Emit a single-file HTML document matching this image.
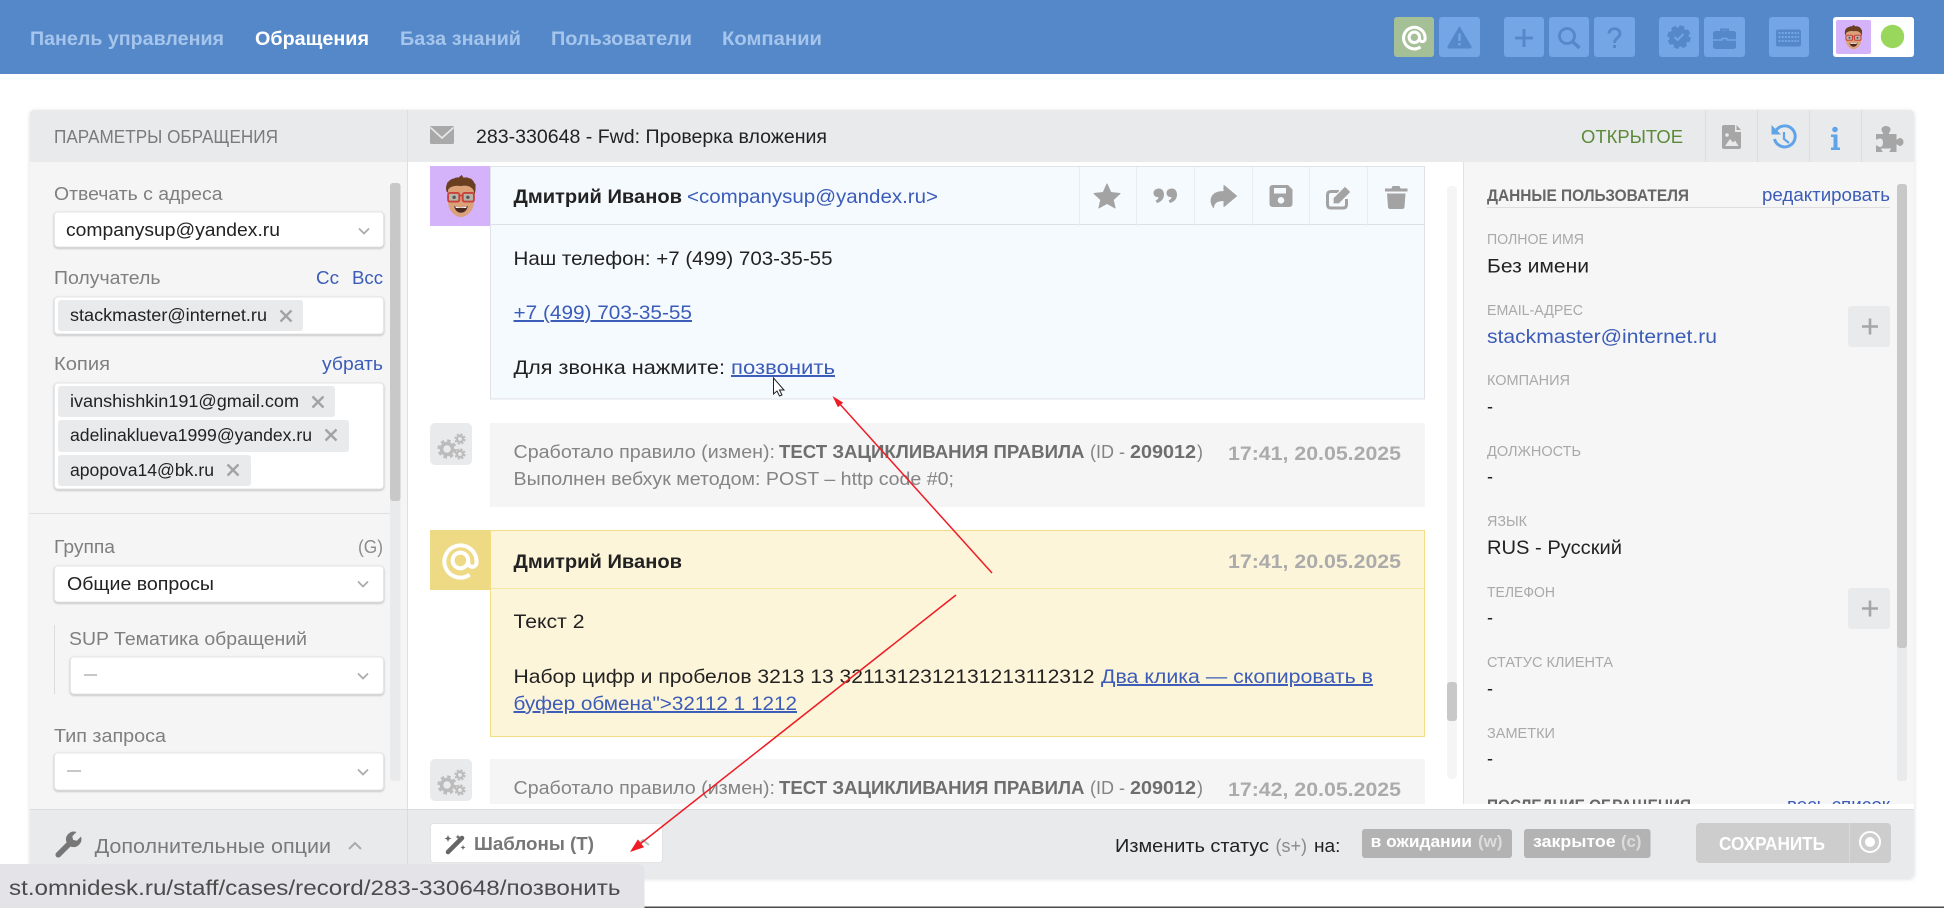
<!DOCTYPE html>
<html lang="ru"><head><meta charset="utf-8"><title>283-330648 - Fwd: Проверка вложения</title>
<style>
html,body{margin:0;padding:0;width:1944px;height:908px;overflow:hidden;background:#fff}
svg{display:block}
text{font-family:"Liberation Sans","Noto Sans CJK SC",sans-serif;font-size:19.8px;fill:#222}
.b{font-weight:700;font-size:19.2px}
.nav{font-weight:700;fill:#a6c5ec;font-size:19px}
.lab{fill:#7f7f7f;font-size:18.6px}
.lnk{fill:#3b5cb8}
.u{fill:#3b5cb8;text-decoration:underline}
.sm{fill:#a9a9a9;font-size:15px}
.tag{font-size:17.4px;fill:#222}
.sys{fill:#848484;font-size:18.6px}
.sysb{fill:#6e6e6e;font-size:18.6px;font-weight:700}
.tm{fill:#ababab;font-weight:700;font-size:19.5px}
.inp{filter:drop-shadow(0 1px 1px rgba(0,0,0,.25))}
</style></head><body>
<svg xmlns="http://www.w3.org/2000/svg" width="1944" height="908" viewBox="0 0 1944 908">
<defs>
<clipPath id="clipc"><rect x="408" y="162" width="1505" height="642"/></clipPath>
<g id="memoji">
  <path d="M13 24C11 14 18 8 26 9L31 5 33 9 41 9C47 13 48 20 46 27L44 26H15Z" fill="#6a3e20"/>
  <path d="M15 22C15 21 20 16 30 18 38 16 44 20 45 24V37C45 46 37 54 30 54 23 54 15 46 15 37Z" fill="#dba179"/>
  <path d="M14 24C16 18 22 18 30 16 38 14 44 18 46 24L47 16 38 8H24L14 14Z" fill="#6a3e20"/>
  <rect x="15" y="26" width="13" height="10" rx="2" fill="#b9b4a8" stroke="#c8413a" stroke-width="2.2"/>
  <rect x="32" y="26" width="13" height="10" rx="2" fill="#b9b4a8" stroke="#c8413a" stroke-width="2.2"/>
  <path d="M28 29h4" stroke="#c8413a" stroke-width="2"/>
  <circle cx="22" cy="31" r="2" fill="#555"/><circle cx="38" cy="31" r="2" fill="#555"/>
  <path d="M22 41C26 43 34 43 38 41 37 47 33 49 30 49 27 49 23 47 22 41Z" fill="#4a2a20"/>
  <path d="M23.500 41.500C27 43 33 43 36.500 41.500L36 43.500H24Z" fill="#fff"/>
</g>
<g id="gear" fill="none" stroke="#bcbcbc">
  <circle cx="10" cy="16" r="5.500" stroke-width="3.500"/>
  <circle cx="10" cy="16" r="8.300" stroke-width="2.600" stroke-dasharray="3.500 3"/>
  <circle cx="23" cy="6" r="3" stroke-width="2.200"/>
  <circle cx="23" cy="6" r="4.800" stroke-width="1.600" stroke-dasharray="2.300 1.500"/>
  <circle cx="23" cy="21" r="3" stroke-width="2.200"/>
  <circle cx="23" cy="21" r="4.800" stroke-width="1.600" stroke-dasharray="2.300 1.500"/>
</g>
<path id="chev" d="M-5-2.500 0 2.500 5-2.500" fill="none" stroke="#aaa" stroke-width="1.700"/>
<path id="xx" d="M-5.500-5.500 5.500 5.500M5.500-5.500-5.500 5.500" fill="none" stroke="#a3a3a3" stroke-width="2.400"/>
<g id="plus"><path d="M0-8V8M-8 0H8" stroke="#a6a6a6" stroke-width="2.600"/></g>
</defs>

<!-- NAVBAR -->
<rect width="1944" height="74" fill="#5488c8"/>
<text class="nav" x="30" y="45" textLength="194" lengthAdjust="spacingAndGlyphs">Панель управления</text>
<text class="nav" style="fill:#fff" x="255" y="45" textLength="114" lengthAdjust="spacingAndGlyphs">Обращения</text>
<text class="nav" x="400" y="45" textLength="121" lengthAdjust="spacingAndGlyphs">База знаний</text>
<text class="nav" x="551" y="45" textLength="141" lengthAdjust="spacingAndGlyphs">Пользователи</text>
<text class="nav" x="722" y="45" textLength="100" lengthAdjust="spacingAndGlyphs">Компании</text>

<rect x="1394" y="17" width="40" height="40" rx="3" fill="#a5c097"/>
<g fill="#74a5e5">
<rect x="1439" y="17" width="41" height="40" rx="3"/>
<rect x="1504" y="17" width="40" height="40" rx="3"/>
<rect x="1549" y="17" width="40" height="40" rx="3"/>
<rect x="1594" y="17" width="41" height="40" rx="3"/>
<rect x="1659" y="17" width="40" height="40" rx="3"/>
<rect x="1704" y="17" width="41" height="40" rx="3"/>
<rect x="1769" y="17" width="40" height="40" rx="3"/>
</g>
<g transform="translate(1402,25) scale(.77)" fill="none" stroke="#fff" stroke-width="4">
  <path d="M24 28.500A14 14 0 1 1 30 16V18A3.600 3.600 0 0 1 22.800 18V16"/><circle cx="16" cy="16" r="6.800"/>
</g>
<path d="M1459.500 27 1471 46.500Q1471.500 48 1470 48H1449Q1447.500 48 1448 46.500Z" fill="#5488c8" stroke="#5488c8" stroke-linejoin="round"/>
<path d="M1459.500 33.500V41M1459.500 43V45.500" stroke="#74a5e5" stroke-width="2.400"/>
<path d="M1524 29V47M1515 38H1533" stroke="#5488c8" stroke-width="2.800"/>
<circle cx="1567" cy="36" r="7.500" fill="none" stroke="#5488c8" stroke-width="2.800"/>
<path d="M1572.500 41.500 1579.500 48" stroke="#5488c8" stroke-width="3.400"/>
<path d="M1609 33.500C1609 27 1620 27 1620 33.500 1620 38 1614.500 38 1614.500 43" fill="none" stroke="#5488c8" stroke-width="2.800"/>
<rect x="1613" y="45" width="3" height="3" fill="#5488c8"/>
<g transform="translate(1679,37)">
  <circle r="9.800" fill="#5488c8"/><circle r="10.300" fill="none" stroke="#5488c8" stroke-width="2.800" stroke-dasharray="5 3.090"/>
  <path d="M-4.500 0-1.500 3 4.500-3" fill="none" stroke="#74a5e5" stroke-width="2"/>
</g>
<path d="M1721 31V29.500H1728V31" fill="none" stroke="#5488c8" stroke-width="2"/>
<rect x="1713" y="31" width="23" height="18" rx="2.500" fill="#5488c8"/>
<path d="M1713 40H1722V38.500H1727V40H1736" stroke="#74a5e5" stroke-width="1.400" fill="none"/>
<rect x="1776" y="29.500" width="25" height="17" rx="2" fill="#5488c8"/>
<path d="M1778.500 33H1799M1778.500 37H1799M1778.500 41H1799" stroke="#74a5e5" stroke-width="2" stroke-dasharray="2 1.200"/>
<rect x="1833" y="17" width="81" height="40" rx="3" fill="#fff"/>
<rect x="1836" y="20" width="35" height="34" rx="2" fill="#d5b3fb"/>
<g transform="translate(1853.500,37) scale(.5) translate(-30,-29.500)"><use href="#memoji"/></g>
<circle cx="1892.500" cy="36.500" r="11.700" fill="#98d65c"/>

<!-- PANEL -->
<rect x="30" y="110" width="1884" height="768" rx="4" fill="#fff" style="filter:drop-shadow(0 1px 2px rgba(0,0,0,.14))"/>
<path d="M30 162V114a4 4 0 0 1 4-4H1910a4 4 0 0 1 4 4V162Z" fill="#e9eaec"/>
<rect x="30" y="162" width="377" height="647" fill="#f5f5f5"/>
<rect x="1463" y="162" width="451" height="642" fill="#f6f6f6"/>
<path d="M407.500 110V809" stroke="#dfdfe1"/>
<path d="M1463.500 162V804" stroke="#e2e2e2"/>
<path d="M1705.500 110V162M1757.500 110V162M1809.500 110V162M1861.500 110V162" stroke="#dcdde0"/>

<text class="lab" x="54" y="143" textLength="224" lengthAdjust="spacingAndGlyphs" style="fill:#7b7b7b;font-size:18px">ПАРАМЕТРЫ ОБРАЩЕНИЯ</text>
<rect x="430" y="126" width="24" height="18" rx="1.500" fill="#a9a9a9"/>
<path d="M430.500 127.500 442 138 453.500 127.500" fill="none" stroke="#e9eaec" stroke-width="1.600"/>
<text x="476" y="143" textLength="351" lengthAdjust="spacingAndGlyphs" style="font-size:19.5px">283-330648 - Fwd: Проверка вложения</text>
<text x="1581" y="143" textLength="102" lengthAdjust="spacingAndGlyphs" style="fill:#5b8a38;font-size:18.6px">ОТКРЫТОЕ</text>

<!-- header right icons -->
<path d="M1724 125H1735V132H1741V147Q1741 149 1739 149H1724Q1722 149 1722 147V127Q1722 125 1724 125ZM1736.500 125 1741 130H1736.500Z" fill="#a6a6a6"/>
<path d="M1725 146 1730 139 1733 142.500 1735 140.500 1738.500 146Z" fill="#e9eaec"/><circle cx="1727" cy="135" r="1.800" fill="#e9eaec"/>
<path d="M1776 130.500A10.500 10.500 0 1 1 1774.500 139" fill="none" stroke="#5fa4e8" stroke-width="3"/>
<path d="M1771.500 125V134.500H1781Z" fill="#5fa4e8"/>
<path d="M1784 132V139L1789 143" fill="none" stroke="#5fa4e8" stroke-width="2.200"/>
<circle cx="1835" cy="129.500" r="2.800" fill="#5fa4e8"/>
<path d="M1831 134.500H1837.500V147.500H1840V150H1831V147.500H1833.500V137H1831Z" fill="#5fa4e8"/>
<path d="M1876 134H1883C1883.500 133 1881.500 131.500 1881.500 129.500 1881.500 127 1884 126 1886 126 1888 126 1890.500 127 1890.500 129.500 1890.500 131.500 1888.500 133 1889 134H1896.500V139.500C1897.500 140 1898.500 138 1900 138 1902 138 1903.500 140 1903.500 142 1903.500 144 1902 146 1900 146 1898.500 146 1897.500 144 1896.500 144.500V152H1889.500C1889 151 1891 150 1891 148.500H1881C1881 150 1883 151 1882.500 152H1876V145.500C1877 145 1878.500 147 1880 147 1882 147 1883 145 1883 142.500 1883 140 1882 138.500 1880 138.500 1878.500 138.500 1877 140 1876 139.500Z" fill="#a6a6a6"/>

<!-- LEFT COLUMN -->
<rect x="390" y="183" width="10.500" height="598" rx="3" fill="#e9eaec"/>
<rect x="390" y="183" width="10.500" height="318" rx="3" fill="#c8c8c8"/>
<path d="M30 513.500H390" stroke="#e0e0e0"/>

<text class="lab" x="54" y="200" textLength="168.500" lengthAdjust="spacingAndGlyphs">Отвечать с адреса</text>
<rect class="inp" x="54.500" y="212" width="329" height="35" rx="3.500" fill="#fff" stroke="#e6e6e6"/>
<text x="66" y="236" textLength="214" lengthAdjust="spacingAndGlyphs" style="font-size:18.6px">companysup@yandex.ru</text>
<use href="#chev" x="364" y="231"/>

<text class="lab" x="54" y="284" textLength="106.500" lengthAdjust="spacingAndGlyphs">Получатель</text>
<text class="lnk" x="316" y="284" textLength="23" lengthAdjust="spacingAndGlyphs" style="font-size:18.6px">Cc</text>
<text class="lnk" x="352" y="284" textLength="31" lengthAdjust="spacingAndGlyphs" style="font-size:18.6px">Bcc</text>
<rect class="inp" x="54.500" y="297" width="329" height="37" rx="3.500" fill="#fff" stroke="#e6e6e6"/>
<rect x="58" y="300" width="245" height="31" rx="3" fill="#e9eaec"/>
<text class="tag" x="70" y="321" textLength="197" lengthAdjust="spacingAndGlyphs">stackmaster@internet.ru</text>
<use href="#xx" x="286" y="316"/>

<text class="lab" x="54" y="370" textLength="56" lengthAdjust="spacingAndGlyphs">Копия</text>
<text class="lnk" x="322" y="370" textLength="61" lengthAdjust="spacingAndGlyphs" style="font-size:18.6px">убрать</text>
<rect class="inp" x="54.500" y="383" width="329" height="106" rx="3.500" fill="#fff" stroke="#e6e6e6"/>
<rect x="58" y="386" width="277" height="31" rx="3" fill="#e9eaec"/>
<text class="tag" x="70" y="407" textLength="229" lengthAdjust="spacingAndGlyphs">ivanshishkin191@gmail.com</text>
<use href="#xx" x="318" y="402"/>
<rect x="58" y="420" width="291" height="32" rx="3" fill="#e9eaec"/>
<text class="tag" x="70" y="441" textLength="242" lengthAdjust="spacingAndGlyphs">adelinaklueva1999@yandex.ru</text>
<use href="#xx" x="331" y="435"/>
<rect x="58" y="455" width="193" height="31" rx="3" fill="#e9eaec"/>
<text class="tag" x="70" y="476" textLength="144" lengthAdjust="spacingAndGlyphs">apopova14@bk.ru</text>
<use href="#xx" x="233" y="470"/>

<text class="lab" x="54" y="553" textLength="61" lengthAdjust="spacingAndGlyphs">Группа</text>
<text class="lab" x="358" y="553" textLength="25" lengthAdjust="spacingAndGlyphs" style="fill:#8c8c8c">(G)</text>
<rect class="inp" x="54.500" y="566" width="329" height="36" rx="3.500" fill="#fff" stroke="#e6e6e6"/>
<text x="67" y="590" textLength="147" lengthAdjust="spacingAndGlyphs" style="font-size:18.6px">Общие вопросы</text>
<use href="#chev" x="363" y="584"/>

<path d="M54.500 625V694" stroke="#dcdcdc"/>
<text class="lab" x="69" y="645" textLength="238" lengthAdjust="spacingAndGlyphs">SUP Тематика обращений</text>
<rect class="inp" x="70.500" y="657" width="313" height="37" rx="3.500" fill="#fff" stroke="#e6e6e6"/>
<path d="M84 675H97" stroke="#a9a9a9" stroke-width="1.300"/>
<use href="#chev" x="363" y="676"/>
<text class="lab" x="54" y="742" textLength="112" lengthAdjust="spacingAndGlyphs">Тип запроса</text>
<rect class="inp" x="54.500" y="753" width="329" height="37" rx="3.500" fill="#fff" stroke="#e6e6e6"/>
<path d="M67 771H81" stroke="#a9a9a9" stroke-width="1.300"/>
<use href="#chev" x="363" y="772"/>

<!-- MESSAGES -->
<g clip-path="url(#clipc)">
<rect x="1447" y="186" width="10" height="593" rx="4" fill="#f5f5f5"/>
<rect x="1447" y="682" width="10" height="39" rx="3" fill="#c8c8c8"/>

<rect x="430" y="166" width="60" height="60" fill="#d5b3fb"/>
<g transform="translate(461,196) scale(.86) translate(-30,-29.500)"><use href="#memoji"/></g>
<rect x="490.500" y="166.500" width="934" height="232.500" fill="#f5faff" stroke="#dfe3e8"/>
<path d="M491 224.500H1424" stroke="#dde1e6"/>
<path d="M1079.500 167V226M1136.500 167V226M1194.500 167V226M1252.500 167V226M1309.500 167V226M1367.500 167V226" stroke="#e9edf1"/>
<text class="b" x="513.500" y="203" textLength="168.500" lengthAdjust="spacingAndGlyphs">Дмитрий Иванов</text>
<text class="lnk" x="687" y="203" textLength="251" lengthAdjust="spacingAndGlyphs">&lt;companysup@yandex.ru&gt;</text>
<polygon points="1107,184 1110.800,192.500 1120,193.500 1113.200,199.800 1115.100,208 1107,203.500 1098.900,208 1100.800,199.800 1094,193.500 1103.200,192.500" fill="#a3a3a3" stroke="#a3a3a3" stroke-linejoin="round"/>
<path d="M1159 188.500c3 0 5 2.500 5 6 0 4.500-3 7.500-7 8.500l-1.500-2.500c2-.7 3-2 3-3.500-3 .5-5-1.500-5-4 0-2.700 2.300-4.500 5.500-4.500zM1172 188.500c3 0 5 2.500 5 6 0 4.500-3 7.500-7 8.500l-1.500-2.500c2-.7 3-2 3-3.500-3 .5-5-1.500-5-4 0-2.700 2.300-4.500 5.500-4.500z" fill="#a3a3a3"/>
<path d="M1224 185.500 1236.500 196 1224 206.500V200.500C1218 200.500 1214 202 1213.500 207.500 1208.500 200 1211 191.500 1224 191.500Z" fill="#a3a3a3" stroke="#a3a3a3" stroke-linejoin="round"/>
<path fill-rule="evenodd" d="M1273 185H1288L1292.500 189.500V203.500Q1292.500 207 1289 207H1273Q1269.500 207 1269.500 203.500V188.500Q1269.500 185 1273 185ZM1274 188V193.500H1286V188ZM1281 197A3.300 3.300 0 1 0 1281 203.600 3.300 3.300 0 0 0 1281 197Z" fill="#a3a3a3"/>
<path d="M1339 191.500H1331Q1327.500 191.500 1327.500 195V204.500Q1327.500 208 1331 208H1343Q1346.500 208 1346.500 204.500V199" fill="none" stroke="#a3a3a3" stroke-width="3"/>
<path d="M1333 204V198L1345 186 1351 192 1339 204Z" fill="#a3a3a3" stroke="#f5faff" stroke-width="1.200"/>
<path d="M1385 188.500H1391.500L1392.500 186H1399.500L1400.500 188.500H1407.500V191.500H1385ZM1387 193.500H1405.500L1404.500 207Q1404.300 209 1402 209H1390.500Q1388.200 209 1388 207Z" fill="#a3a3a3"/>

<text x="513.500" y="265" textLength="319" lengthAdjust="spacingAndGlyphs">Наш телефон: +7 (499) 703-35-55</text>
<text class="u" x="513.500" y="319" textLength="178.500" lengthAdjust="spacingAndGlyphs">+7 (499) 703-35-55</text>
<text x="513.500" y="374" textLength="211.500" lengthAdjust="spacingAndGlyphs">Для звонка нажмите:</text>
<text class="u" x="731" y="374" textLength="104" lengthAdjust="spacingAndGlyphs">позвонить</text>
<path d="M773.500 378V394L777 391 779.500 396 782 395 779.500 390H784Z" fill="#fff" stroke="#222" stroke-width="1"/>

<rect x="430" y="423" width="42" height="42" rx="5" fill="#e9eaec"/>
<g transform="translate(437,433)"><use href="#gear"/></g>
<rect x="490" y="423" width="935" height="84" fill="#f5f5f5"/>
<text class="sys" x="513.500" y="458" textLength="261.500" lengthAdjust="spacingAndGlyphs">Сработало правило (измен):</text>
<text class="sysb" x="779" y="458" textLength="305.500" lengthAdjust="spacingAndGlyphs">ТЕСТ ЗАЦИКЛИВАНИЯ ПРАВИЛА</text>
<text class="sys" x="1090" y="458" textLength="35" lengthAdjust="spacingAndGlyphs">(ID -</text>
<text class="sysb" x="1130" y="458" textLength="66" lengthAdjust="spacingAndGlyphs">209012</text>
<text class="sys" x="1197" y="458" textLength="6" lengthAdjust="spacingAndGlyphs">)</text>
<text class="tm" x="1228" y="460" textLength="173" lengthAdjust="spacingAndGlyphs">17:41, 20.05.2025</text>
<text class="sys" x="513.500" y="485" textLength="440.500" lengthAdjust="spacingAndGlyphs">Выполнен вебхук методом: POST – http code #0;</text>

<rect x="430" y="530" width="60" height="60" fill="#eed985"/>
<g transform="translate(442,542) scale(1.15)" fill="none" stroke="#fff" stroke-width="3.500">
  <path d="M24 28.500A14 14 0 1 1 30 16V18A3.600 3.600 0 0 1 22.800 18V16"/><circle cx="16" cy="16" r="6.800"/>
</g>
<rect x="490.500" y="530.500" width="934" height="206" fill="#fdf5d9" stroke="#f3dd82"/>
<path d="M491 588.500H1424" stroke="#f5e5a6"/>
<text class="b" x="513.500" y="568" textLength="168.500" lengthAdjust="spacingAndGlyphs">Дмитрий Иванов</text>
<text class="tm" x="1228" y="568" textLength="173" lengthAdjust="spacingAndGlyphs">17:41, 20.05.2025</text>
<text x="513.500" y="628" textLength="71" lengthAdjust="spacingAndGlyphs">Текст 2</text>
<text x="513.500" y="683" textLength="581" lengthAdjust="spacingAndGlyphs">Набор цифр и пробелов 3213 13 3211312312131213112312</text>
<text class="u" x="1101" y="683" textLength="272" lengthAdjust="spacingAndGlyphs">Два клика — скопировать в</text>
<text class="u" x="513.500" y="710" textLength="283.500" lengthAdjust="spacingAndGlyphs">буфер обмена"&gt;32112 1 1212</text>

<rect x="430" y="759" width="42" height="42" rx="5" fill="#e9eaec"/>
<g transform="translate(437,769)"><use href="#gear"/></g>
<rect x="490" y="759" width="935" height="60" fill="#f5f5f5"/>
<text class="sys" x="513.500" y="794" textLength="261.500" lengthAdjust="spacingAndGlyphs">Сработало правило (измен):</text>
<text class="sysb" x="779" y="794" textLength="305.500" lengthAdjust="spacingAndGlyphs">ТЕСТ ЗАЦИКЛИВАНИЯ ПРАВИЛА</text>
<text class="sys" x="1090" y="794" textLength="35" lengthAdjust="spacingAndGlyphs">(ID -</text>
<text class="sysb" x="1130" y="794" textLength="66" lengthAdjust="spacingAndGlyphs">209012</text>
<text class="sys" x="1197" y="794" textLength="6" lengthAdjust="spacingAndGlyphs">)</text>
<text class="tm" x="1228" y="796" textLength="173" lengthAdjust="spacingAndGlyphs">17:42, 20.05.2025</text>

<!-- RIGHT COLUMN -->
<rect x="1897" y="184" width="10" height="597" rx="3" fill="#e9eaec"/>
<rect x="1897" y="184" width="10" height="464" rx="3" fill="#c8c8c8"/>
<text class="b" x="1487" y="201" textLength="202" lengthAdjust="spacingAndGlyphs" style="font-size:16.2px;fill:#666">ДАННЫЕ ПОЛЬЗОВАТЕЛЯ</text>
<text class="lnk" x="1762" y="201" textLength="128" lengthAdjust="spacingAndGlyphs" style="font-size:18px">редактировать</text>
<path d="M1487 207.500H1890" stroke="#dedede"/>
<text class="sm" x="1487" y="244" textLength="97" lengthAdjust="spacingAndGlyphs">ПОЛНОЕ ИМЯ</text>
<text x="1487" y="272.500" textLength="102" lengthAdjust="spacingAndGlyphs">Без имени</text>
<text class="sm" x="1487" y="315" textLength="96" lengthAdjust="spacingAndGlyphs">EMAIL-АДРЕС</text>
<text class="lnk" x="1487" y="343" textLength="230" lengthAdjust="spacingAndGlyphs">stackmaster@internet.ru</text>
<rect x="1848" y="306" width="42" height="41" rx="3" fill="#e9eaec"/><use href="#plus" x="1870" y="326.500"/>
<text class="sm" x="1487" y="385" textLength="83" lengthAdjust="spacingAndGlyphs">КОМПАНИЯ</text>
<text x="1487" y="413" textLength="6" lengthAdjust="spacingAndGlyphs">-</text>
<text class="sm" x="1487" y="456" textLength="94" lengthAdjust="spacingAndGlyphs">ДОЛЖНОСТЬ</text>
<text x="1487" y="483" textLength="6" lengthAdjust="spacingAndGlyphs">-</text>
<text class="sm" x="1487" y="526" textLength="40" lengthAdjust="spacingAndGlyphs">ЯЗЫК</text>
<text x="1487" y="554" textLength="135" lengthAdjust="spacingAndGlyphs">RUS - Русский</text>
<text class="sm" x="1487" y="597" textLength="68" lengthAdjust="spacingAndGlyphs">ТЕЛЕФОН</text>
<text x="1487" y="624" textLength="6" lengthAdjust="spacingAndGlyphs">-</text>
<rect x="1848" y="588" width="42" height="41" rx="3" fill="#e9eaec"/><use href="#plus" x="1870" y="608.500"/>
<text class="sm" x="1487" y="667" textLength="126" lengthAdjust="spacingAndGlyphs">СТАТУС КЛИЕНТА</text>
<text x="1487" y="695" textLength="6" lengthAdjust="spacingAndGlyphs">-</text>
<text class="sm" x="1487" y="738" textLength="68" lengthAdjust="spacingAndGlyphs">ЗАМЕТКИ</text>
<text x="1487" y="765" textLength="6" lengthAdjust="spacingAndGlyphs">-</text>
<text class="b" x="1487" y="811" textLength="204" lengthAdjust="spacingAndGlyphs" style="font-size:16.2px;fill:#666">ПОСЛЕДНИЕ ОБРАЩЕНИЯ</text>
<text class="lnk" x="1787" y="811" textLength="103" lengthAdjust="spacingAndGlyphs" style="font-size:18px">весь список</text>
</g>

<!-- BOTTOM BAR -->
<path d="M30 809H1914V874a4 4 0 0 1-4 4H34a4 4 0 0 1-4-4Z" fill="#e9eaec"/>
<path d="M30 809.500H1914" stroke="#dcdcde"/>
<path d="M407.500 809V864" stroke="#dcdcde"/>
<path transform="translate(71,842) rotate(45)" d="M-3.200-11V-5L0-3 3.200-5V-11A8 8 0 0 1 2.800 3.500V18A2.800 2.800 0 0 1-2.800 18V3.500A8 8 0 0 1-3.200-11Z" fill="#777"/>
<text x="94.600" y="853" textLength="236.500" lengthAdjust="spacingAndGlyphs" style="fill:#7a7a7a;font-size:20px">Дополнительные опции</text>
<path d="M349 849 355 843 361 849" fill="none" stroke="#aaa" stroke-width="2"/>

<rect x="430.500" y="823.500" width="232" height="39" rx="3" fill="#fff" stroke="#e3e3e3"/>
<path d="M448 852 462 838" stroke="#666" stroke-width="4.500" stroke-linecap="round"/>
<path d="M448 835l1 2.500 2.500 1-2.500 1-1 2.500-1-2.500-2.500-1 2.500-1zM458 834.500l.7 1.800 1.800.7-1.800.7-.7 1.800-.7-1.800-1.800-.7 1.800-.7zM463 845l.7 1.800 1.800.7-1.800.7-.7 1.800-.7-1.800-1.800-.7 1.800-.7z" fill="#666"/>
<text class="b" x="474" y="850" textLength="120" lengthAdjust="spacingAndGlyphs" style="font-size:18.6px;fill:#777">Шаблоны (Т)</text>
<path d="M637 845 643 840 649 845" fill="none" stroke="#bdbdbd" stroke-width="1.800"/>

<text x="1115" y="852" textLength="154" lengthAdjust="spacingAndGlyphs" style="font-size:18.6px">Изменить статус</text>
<text x="1275.500" y="852" textLength="31.500" lengthAdjust="spacingAndGlyphs" style="font-size:18.6px;fill:#8a8a8a">(s+)</text>
<text x="1314" y="852" textLength="26.500" lengthAdjust="spacingAndGlyphs" style="font-size:18.6px">на:</text>

<rect x="1362" y="829" width="150" height="29" rx="3" fill="#b3b3b3"/>
<text class="b" x="1370.700" y="847" textLength="101.300" lengthAdjust="spacingAndGlyphs" style="font-size:17px;fill:#fff">в ожидании</text>
<text class="b" x="1478" y="847" textLength="24.600" lengthAdjust="spacingAndGlyphs" style="font-size:17px;fill:#dcdcdc">(w)</text>
<rect x="1524" y="829" width="126.500" height="29" rx="3" fill="#b3b3b3"/>
<text class="b" x="1533" y="847" textLength="82.600" lengthAdjust="spacingAndGlyphs" style="font-size:17px;fill:#fff">закрытое</text>
<text class="b" x="1621" y="847" textLength="20.400" lengthAdjust="spacingAndGlyphs" style="font-size:17px;fill:#dcdcdc">(c)</text>

<rect x="1696" y="823" width="195" height="40" rx="4" fill="#cdcdcd"/>
<path d="M1849.500 823V863" stroke="#dadada"/>
<text class="b" x="1719" y="850" textLength="106" lengthAdjust="spacingAndGlyphs" style="font-size:18px;fill:#fff">СОХРАНИТЬ</text>
<circle cx="1870" cy="842" r="10" fill="none" stroke="#fff" stroke-width="2"/><circle cx="1870" cy="842" r="5" fill="#fff"/>

<!-- RED ARROWS -->
<path d="M992 573 838 402" stroke="#ee1c25" stroke-width="1.500" fill="none"/>
<polygon points="832.500,396 843.100,402.600 837.900,407.200" fill="#ee1c25"/>
<path d="M956 595 640 844" stroke="#ee1c25" stroke-width="1.500" fill="none"/>
<polygon points="630,852 644.100,847.200 637.900,839.400" fill="#ee1c25"/>

<!-- STATUS TOOLTIP -->
<path d="M0 864H638a6.500 6.500 0 0 1 6.500 6.500V908H0Z" fill="#e3e3e8"/>
<text x="9" y="895" textLength="611.500" lengthAdjust="spacingAndGlyphs" style="font-size:21px;fill:#4c4c4c">st.omnidesk.ru/staff/cases/record/283-330648/позвонить</text>
<rect x="644.500" y="906.500" width="1299.500" height="1.500" fill="#4a4a4a"/>
</svg>
</body></html>
